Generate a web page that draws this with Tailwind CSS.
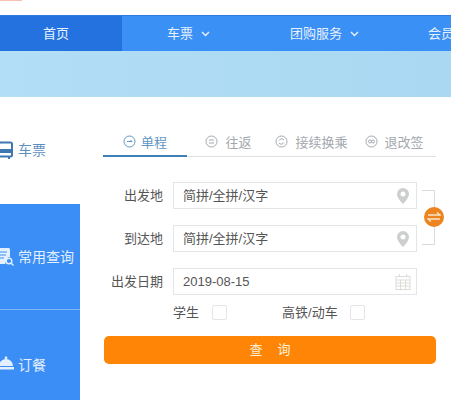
<!DOCTYPE html>
<html lang="zh-CN">
  <head>
    <meta charset="UTF-8" />
    <meta name="viewport" content="width=device-width, initial-scale=1.0" />
    <title>车票查询</title>
    <script src="https://cdn.jsdelivr.net/npm/@tailwindcss/browser@4"></script>
  </head>
  <body class="w-[451px] h-[400px] overflow-hidden bg-white font-['Liberation_Sans','Noto_Sans_CJK_SC',sans-serif] text-[#555]">
    <!-- top strip -->
    <div class="h-[15px] bg-white">
      <div class="w-[22px] h-px bg-[#f8c0b0]"></div>
    </div>

    <!-- nav -->
    <nav class="h-9 bg-[#3a90f5] border-t border-[#2f7be0] flex items-center text-[13px] text-[#e8f2ff] whitespace-nowrap overflow-hidden">
      <div class="w-[122px] h-full shrink-0 bg-[#2472df] flex items-center pl-[43px]">首页</div>
      <div class="ml-[45px] w-[123px] shrink-0 flex items-center gap-[8px]">
        <span>车票</span>
        <svg width="9" height="6" viewBox="0 0 9 6" fill="none" stroke="#e8f2ff" stroke-width="1.4"><path d="M1 1l3.5 3.5L8 1" /></svg>
      </div>
      <div class="w-[138px] shrink-0 flex items-center gap-[8px]">
        <span>团购服务</span>
        <svg width="9" height="6" viewBox="0 0 9 6" fill="none" stroke="#e8f2ff" stroke-width="1.4"><path d="M1 1l3.5 3.5L8 1" /></svg>
      </div>
      <div class="shrink-0">会员</div>
    </nav>

    <!-- banner -->
    <div class="h-[46px] bg-gradient-to-r from-[#b2dff7] to-[#aad7f1]"></div>

    <div class="flex">
      <!-- side menu -->
      <aside class="w-20 shrink-0 text-sm">
        <div class="h-[107px] pb-[2px] flex items-center text-[#5f8fbf] gap-1 -ml-[2px]">
          <svg width="16" height="18" viewBox="0 0 16 18" fill="none" class="shrink-0">
            <rect x="1" y="1.5" width="13" height="14" rx="1.5" stroke="#3f78b0" stroke-width="2" />
            <rect x="1" y="8" width="13" height="4" fill="#3f78b0" />
            <path d="M11 16v2" stroke="#3f78b0" stroke-width="2" />
          </svg>
          <span>车票</span>
        </div>
        <div class="h-[196px] bg-[#3a8ef5] text-[#e4f0ff]">
          <div class="h-[106px] flex items-center border-b border-[#7fb6f8] gap-1">
            <svg width="16" height="20" viewBox="0 0 16 20" fill="none" class="shrink-0 -ml-[2px]">
              <path d="M0 1h11l1 1v8h-2l-3 7H0z" fill="#e4f0ff" />
              <path d="M2 5h7M2 8h6M2 11h4" stroke="#3a8ef5" stroke-width="1.1" />
              <circle cx="11" cy="14" r="2.8" stroke="#e4f0ff" stroke-width="1.4" />
              <path d="M13 16l2.500 2.500" stroke="#e4f0ff" stroke-width="1.4" />
            </svg>
            <span>常用查询</span>
          </div>
          <div class="h-[89px] pt-[45px] flex items-start gap-[4px]">
            <svg width="14" height="16" viewBox="0 0 14 16" class="shrink-0 mt-[1px]">
              <path d="M-1 10a7 7 0 0 1 14 0z" fill="#e4f0ff" />
              <path d="M0 11h14v2.500H0z" fill="#e4f0ff" />
              <circle cx="6" cy="2" r="1.400" fill="#e4f0ff" />
            </svg>
            <span>订餐</span>
          </div>
        </div>
      </aside>

      <!-- search form -->
      <main class="w-[333px] ml-[23px] pt-7 text-[13px]">
        <div class="flex h-8 border-b border-[#dcdfe3] text-[#a3a8ad] whitespace-nowrap">
          <div class="w-[84px] -mb-px border-b-2 border-[#3f7fb3] pt-[8px] flex items-start justify-center gap-[5px] text-[#5f96c4]">
            <svg width="13" height="13" viewBox="0 0 13 13" fill="none" stroke="#5f96c4" class="mt-[2px]"><circle cx="6.5" cy="6.5" r="5.5" /><path d="M4 6.5h5M7.5 5l1.5 1.5" /></svg>
            <span>单程</span>
          </div>
          <div class="w-[83px] pt-[8px] flex items-start justify-center gap-[7px]">
            <svg width="13" height="13" viewBox="0 0 13 13" fill="none" stroke="#a3a8ad" class="mt-[2px]"><circle cx="6.5" cy="6.5" r="5.5" /><path d="M4 5h5M4 8h5" /></svg>
            <span>往返</span>
          </div>
          <div class="w-[83px] pt-[8px] flex items-start justify-center gap-[7px]">
            <svg width="13" height="13" viewBox="0 0 13 13" fill="none" stroke="#a3a8ad" class="mt-[2px]"><circle cx="6.5" cy="6.5" r="5.5" /><path d="M9 5a3 3 0 0 0-5 .5M4 8a3 3 0 0 0 5-.5" /></svg>
            <span>接续换乘</span>
          </div>
          <div class="w-[83px] pt-[8px] flex items-start justify-center gap-[6px]">
            <svg width="13" height="13" viewBox="0 0 13 13" fill="none" stroke="#a3a8ad" class="mt-[2px]"><circle cx="6.5" cy="6.5" r="5.5" /><circle cx="5" cy="6.5" r="1.5" /><circle cx="8" cy="6.5" r="1.5" /></svg>
            <span>退改签</span>
          </div>
        </div>

        <div class="relative mt-[25px] flex flex-col gap-4">
          <div class="flex items-center">
            <label class="w-[60px] text-right">出发地</label>
            <div class="ml-[10px] w-[244px] h-[27px] border border-[#e3e5e8] flex items-center justify-between pl-[9px] pr-[7px]">
              <span>简拼/全拼/汉字</span>
              <svg width="12" height="16" viewBox="0 0 12 16"><path fill-rule="evenodd" d="M6 0a6 6 0 0 1 6 6c0 3.5-4 8-6 10-2-2-6-6.500-6-10a6 6 0 0 1 6-6zm0 3.500a2.500 2.500 0 1 0 0 5 2.500 2.500 0 0 0 0-5z" fill="#ccced0" /></svg>
            </div>
          </div>
          <div class="flex items-center">
            <label class="w-[60px] text-right">到达地</label>
            <div class="ml-[10px] w-[244px] h-[27px] border border-[#e3e5e8] flex items-center justify-between pl-[9px] pr-[7px]">
              <span>简拼/全拼/汉字</span>
              <svg width="12" height="16" viewBox="0 0 12 16"><path fill-rule="evenodd" d="M6 0a6 6 0 0 1 6 6c0 3.5-4 8-6 10-2-2-6-6.500-6-10a6 6 0 0 1 6-6zm0 3.500a2.500 2.500 0 1 0 0 5 2.500 2.500 0 0 0 0-5z" fill="#ccced0" /></svg>
            </div>
          </div>
          <div class="flex items-center">
            <label class="w-[60px] text-right">出发日期</label>
            <div class="ml-[10px] w-[244px] h-[27px] border border-[#e3e5e8] flex items-center justify-between pl-[9px] pr-[5px]">
              <span>2019-08-15</span>
              <svg width="16" height="16" viewBox="0 0 16 16" fill="none" stroke="#dcdcd8"><rect x="1" y="2.500" width="14" height="13" /><path d="M1 6h14M1 9h14M1 12h14M5.500 6v9M10.500 6v9M4.500 0v3M11.500 0v3" /></svg>
            </div>
          </div>

          <!-- swap bracket -->
          <div class="absolute left-[319px] top-[8px] w-[13px] h-[55px] border-y border-r border-[#d9dbde]"></div>
          <div class="absolute left-[321px] top-[25px] w-5 h-5 rounded-full bg-[#ee8420] flex items-center justify-center">
            <svg width="14" height="10" viewBox="0 0 14 10" fill="none" stroke="#fbe6cc" stroke-width="1.3"><path d="M1 3h12L10 .5M13 7H1l3 2.500" /></svg>
          </div>
        </div>

        <div class="mt-[10px] flex items-center h-[15px]">
          <span class="ml-[70px]">学生</span>
          <span class="ml-[13px] w-[15px] h-[15px] border border-[#e3e5e8] rounded-[2px]"></span>
          <span class="ml-[55px]">高铁/动车</span>
          <span class="ml-[12px] w-[15px] h-[15px] border border-[#e3e5e8] rounded-[2px]"></span>
        </div>

        <button class="mt-4 w-[332px] ml-px h-7 rounded-[5px] bg-[#ff8506] text-[#fdf0dc] flex items-center justify-center gap-[15px]">
          <span>查</span><span>询</span>
        </button>
      </main>
    </div>
  </body>
</html>
